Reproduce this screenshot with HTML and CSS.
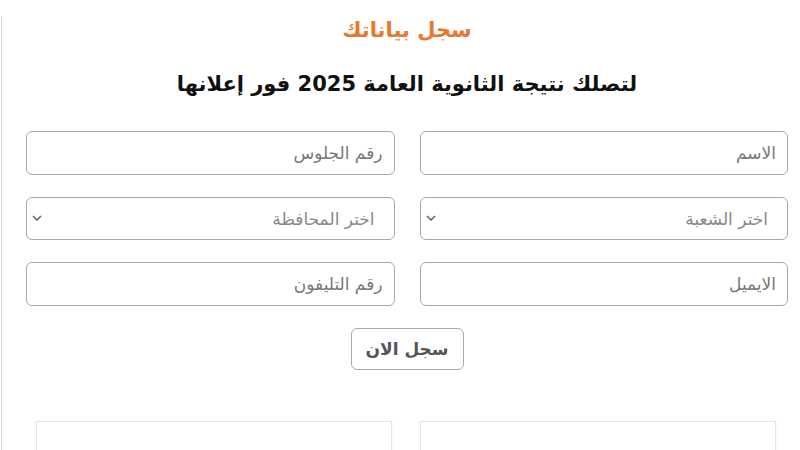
FILE: index.html
```html
<!DOCTYPE html>
<html lang="ar" dir="rtl">
<head>
<meta charset="utf-8">
<title>سجل بياناتك</title>
<link rel="stylesheet" href="styles.css">
</head>
<body>
<div class="page">
  <h2 class="title">سجل بياناتك</h2>
  <h1 class="subtitle">لتصلك نتيجة الثانوية العامة 2025 فور إعلانها</h1>
  <form class="form">
    <div class="grid">
      <input class="field" type="text" placeholder="الاسم">
      <input class="field" type="text" placeholder="رقم الجلوس">
      <div class="select">
        <span class="select-text">اختر الشعبة</span>
        <svg class="chev" width="10" height="6" viewBox="0 0 10 6"><path d="M1 1l4 4 4-4" fill="none" stroke="#666" stroke-width="1.6"/></svg>
      </div>
      <div class="select">
        <span class="select-text">اختر المحافظة</span>
        <svg class="chev" width="10" height="6" viewBox="0 0 10 6"><path d="M1 1l4 4 4-4" fill="none" stroke="#666" stroke-width="1.6"/></svg>
      </div>
      <input class="field" type="email" placeholder="الايميل">
      <input class="field" type="tel" placeholder="رقم التليفون">
    </div>
    <div class="actions">
      <button class="btn" type="button">سجل الان</button>
    </div>
  </form>
  <div class="cards">
    <div class="card"></div>
    <div class="card"></div>
  </div>
</div>
</body>
</html>
```

FILE: styles.css
```css
html, body {
  margin: 0;
  padding: 0;
  background: #fff;
  font-family: "DejaVu Sans", "Noto Sans", sans-serif;
}
.page {
  margin-top: 16px;
  margin-left: 1px;
  border-left: 1px solid #d6d6d6;
  height: 434px;
  box-sizing: border-box;
  padding: 2px 12px 0 24px;
  overflow: hidden;
  direction: rtl;
}
.title {
  margin: 0;
  text-align: center;
  color: #e9782c;
  font-size: 21px;
  font-weight: bold;
  line-height: 24px;
}
.subtitle {
  margin: 29px 0 0;
  text-align: center;
  color: #111;
  font-size: 21px;
  font-weight: bold;
  line-height: 26px;
}
.form {
  margin-top: 34px;
}
.grid {
  display: grid;
  grid-template-columns: 1fr 1fr;
  column-gap: 25px;
  row-gap: 22px;
}
.field, .select {
  box-sizing: border-box;
  height: 44px;
  border: 1px solid #a9a9a9;
  border-radius: 6px;
  background: #fff;
  font-family: "DejaVu Sans", sans-serif;
  font-size: 17px;
  color: #555;
  padding: 0 11px;
  width: 100%;
  direction: rtl;
  outline: none;
}
.field::placeholder {
  color: #777;
}
.select {
  position: relative;
  display: flex;
  align-items: center;
  padding: 0 19px 0 11px;
  height: 43px;
}
.select-text {
  color: #888;
  font-size: 17px;
}
.chev {
  position: absolute;
  left: 5px;
  top: 17px;
}
.actions {
  display: flex;
  justify-content: center;
  margin-top: 22px;
}
.btn {
  width: 113px;
  height: 42px;
  box-sizing: border-box;
  border: 1px solid #a9a9a9;
  border-radius: 6px;
  background: #fff;
  font-family: "DejaVu Sans", sans-serif;
  font-weight: bold;
  font-size: 17px;
  color: #555;
}
.cards {
  display: flex;
  justify-content: center;
  gap: 28px;
  margin-top: 51px;
  padding-right: 2px;
}
.card {
  width: 354px;
  height: 60px;
  border: 1px solid #e6e6e6;
  box-shadow: 0 0 2px rgba(0,0,0,0.06);
}
```
